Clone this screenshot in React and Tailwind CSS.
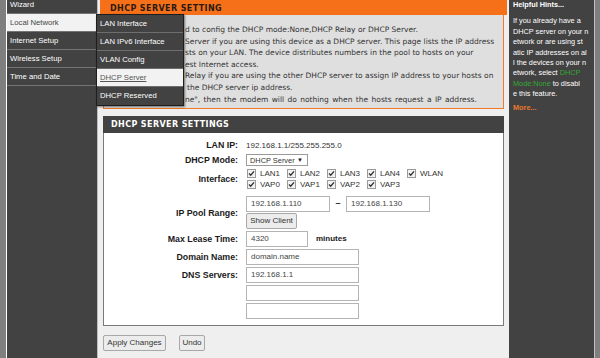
import React from 'react'

const navItems = ['Wizard', 'Local Network', 'Internet Setup', 'Wireless Setup', 'Time and Date']
const subItems = ['LAN Interface', 'LAN IPv6 Interface', 'VLAN Config', 'DHCP Server', 'DHCP Reserved']

// only the part right of the flyout is visible in the picture
const descLines = [
  ['d to config the DHCP mode:None,DHCP Relay or DHCP Server.', ''],
  ['Server if you are using this device as a DHCP server. This page lists the IP address', ''],
  ['sts on your LAN. The device distributes numbers in the pool to hosts on your', ''],
  ['est Internet access.', ''],
  ['Relay if you are using the other DHCP server to assign IP address to your hosts on', ''],
  ['the DHCP server ip address.', 'pl-[2px]'],
  ['ne", then the modem will do nothing when the hosts request a IP address.', '[word-spacing:1px]'],
]

const Check = () => (
  <svg width="9" height="9" viewBox="0 0 9 9" className="shrink-0">
    <rect x="0.5" y="0.5" width="8" height="8" fill="#f2f2f2" stroke="#9a9a9a" />
    <path d="M2 4.6 L3.7 6.3 L7 2.4" fill="none" stroke="#333" strokeWidth="1.4" />
  </svg>
)

const Box = ({ label }) => (
  <div className="flex items-center w-[40px] h-[11px] pl-[1px] gap-[4px]">
    <Check />
    <span>{label}</span>
  </div>
)

const Field = ({ w, value }) => (
  <div className={`${w} h-[16px] border border-[#b4b4b4] bg-white flex items-center pl-[4px] text-[#444]`}>
    {value}
  </div>
)

const Label = ({ children, className = '' }) => (
  <div className={`w-[142px] shrink-0 pr-[8px] text-right font-bold text-[8.8px] text-[#1a1a1a] ${className}`}>
    {children}
  </div>
)

const Btn = ({ children, className = '' }) => (
  <div className={`h-[16px] border border-[#a8a8a8] rounded-[2px] bg-[#ececec] flex items-center justify-center px-[3px] text-[#333] ${className}`}>
    {children}
  </div>
)

export default function App() {
  return (
    <div className="w-[600px] h-[358px] overflow-hidden flex bg-[#efefef] relative whitespace-nowrap font-['Liberation_Sans',Arial,sans-serif] text-[8px]">
      <div className="w-[6px] shrink-0 bg-[#7f7f7f]" />

      {/* left nav */}
      <div className="w-[92px] shrink-0 bg-[#424242] border-l border-white border-r border-r-[#bdbdbd] -mt-[4px]">
        {navItems.map((n) => (
          <div
            key={n}
            className={`h-[18px] border-b border-[#747474] flex items-center pl-[3px] text-[7.7px] ${n === 'Local Network' ? 'bg-[#f2f2f2] text-[#444]' : 'text-white'}`}
          >
            {n}
          </div>
        ))}
      </div>

      {/* main */}
      <div className="w-[411px] shrink-0 px-[2px]">
        <div className="h-[15px] bg-[#f6701a] pt-[3px] pl-[10px] leading-[12px] font-['DejaVu_Sans',sans-serif] font-bold text-[8px] tracking-[0.4px] text-[#2a1a10]">
          DHCP SERVER SETTING
        </div>
        <div className="mx-[3px] bg-[#dfdfdf] border-x border-b border-[#f07a28] pt-[9px] pb-[3px] pl-[81px] text-[#333] text-[7.5px] font-['DejaVu_Sans',sans-serif]">
          {descLines.map(([v, c], i) => (
            <div key={i} className={`leading-[11.6px] ${c}`}>{v}</div>
          ))}
        </div>

        <div className="mx-[3px] mt-[7px]">
          <div className="h-[17px] bg-[#424242] flex items-center pl-[8px] font-['DejaVu_Sans',sans-serif] font-bold text-[8px] tracking-[0.4px] text-white">
            DHCP SERVER SETTINGS
          </div>
          <div className="h-[193px] bg-white border border-t-0 border-[#7a7a7a] pt-[6px] text-[#333]">
            <div className="flex items-center h-[13px]">
              <Label>LAN IP:</Label>
              <div>192.168.1.1/255.255.255.0</div>
            </div>
            <div className="flex items-center h-[16px]">
              <Label>DHCP Mode:</Label>
              <div className="w-[62px] h-[12px] border border-[#9a9a9a] flex items-center justify-between pl-[3px] pr-[4px] text-[7.4px]">
                <span>DHCP Server</span>
                <span className="text-[6px] text-[#222]">▼</span>
              </div>
            </div>
            <div className="flex items-center h-[22px]">
              <Label>Interface:</Label>
              <div>
                <div className="flex">
                  <Box label="LAN1" />
                  <Box label="LAN2" />
                  <Box label="LAN3" />
                  <Box label="LAN4" />
                  <Box label="WLAN" />
                </div>
                <div className="flex">
                  <Box label="VAP0" />
                  <Box label="VAP1" />
                  <Box label="VAP2" />
                  <Box label="VAP3" />
                </div>
              </div>
            </div>
            <div className="flex items-center mt-[6px]">
              <Label className="pt-[2px]">IP Pool Range:</Label>
              <div className="flex flex-col gap-[1px]">
                <div className="flex items-center">
                  <Field w="w-[84px]" value="192.168.1.110" />
                  <span className="w-[16px] text-center font-bold text-[9px]">–</span>
                  <Field w="w-[84px]" value="192.168.1.130" />
                </div>
                <Btn className="w-[51px]">Show Client</Btn>
              </div>
            </div>
            <div className="flex items-center h-[18px] mt-[1px]">
              <Label>Max Lease Time:</Label>
              <Field w="w-[62px]" value="4320" />
              <span className="ml-[8px] font-bold text-[8px] text-[#1a1a1a]">minutes</span>
            </div>
            <div className="flex items-center h-[18px]">
              <Label>Domain Name:</Label>
              <Field w="w-[113px]" value="domain.name" />
            </div>
            <div className="flex items-center h-[18px]">
              <Label>DNS Servers:</Label>
              <Field w="w-[113px]" value="192.168.1.1" />
            </div>
            <div className="flex items-center h-[18px]">
              <Label />
              <Field w="w-[113px]" value="" />
            </div>
            <div className="flex items-center h-[18px]">
              <Label />
              <Field w="w-[113px]" value="" />
            </div>
          </div>
        </div>

        <div className="flex mt-[9px] ml-[3px] gap-[13px]">
          <Btn className="w-[63px]">Apply Changes</Btn>
          <Btn className="w-[26px]">Undo</Btn>
        </div>
      </div>

      {/* hints */}
      <div className="w-[86px] shrink-0 bg-[#424242] border-r border-[#c0c0c0] pl-[4px] text-[7.3px] text-white leading-[10.4px]">
        <div className="font-bold">Helpful Hints...</div>
        <div className="mt-[6px]">
          <div>If you already have a</div>
          <div>DHCP server on your n</div>
          <div>etwork or are using st</div>
          <div>atic IP addresses on al</div>
          <div>l the devices on your n</div>
          <div>etwork, select <span className="text-[#34a834]">DHCP</span></div>
          <div><span className="text-[#34a834]">Mode:None</span> to disabl</div>
          <div>e this feature.</div>
        </div>
        <div className="mt-[3px] font-bold text-[#e9782e]">More...</div>
      </div>
      <div className="flex-1 bg-[#7f7f7f]" />

      {/* flyout menu */}
      <div className="absolute left-[96px] top-[14px] w-[88px] bg-[#424242] border border-[#1e1e1e] shadow-[1px_1px_2px_rgba(0,0,0,0.5)]">
        {subItems.map((s) => (
          <div
            key={s}
            className={`h-[18px] border-b border-[#6e6e6e] last:border-b-0 flex items-center pl-[3px] text-[7.7px] ${s === 'DHCP Server' ? 'bg-[#f2f2f2] text-[#555] underline' : 'text-white'}`}
          >
            {s}
          </div>
        ))}
      </div>
    </div>
  )
}
